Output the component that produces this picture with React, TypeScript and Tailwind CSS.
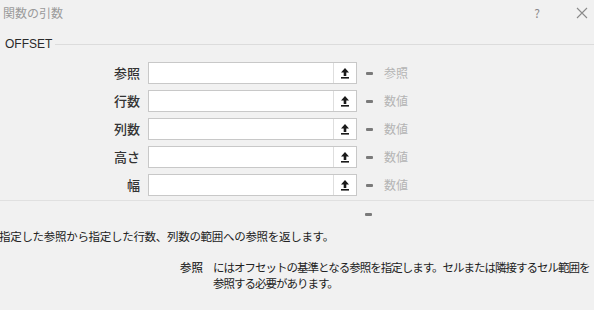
import React from "react"

const rows = [
  { label: "参照", value: "参照" },
  { label: "行数", value: "数値" },
  { label: "列数", value: "数値" },
  { label: "高さ", value: "数値" },
  { label: "幅", value: "数値" },
]

function UploadIcon() {
  return (
    <svg width="10" height="12" viewBox="0 0 10 12">
      <path d="M5 1 L9 5.5 H6.3 V9 H3.7 V5.5 H1 Z" fill="#1a1a1a" />
      <rect x="1" y="10" width="8" height="1.6" fill="#1a1a1a" />
    </svg>
  )
}

export default function App() {
  return (
    <div
      className="w-[594px] h-[310px] bg-[#f1f1f1] overflow-hidden text-[#222]"
      style={{ fontFamily: '"Noto Sans CJK JP", "Liberation Sans", sans-serif' }}
    >
      {/* title bar */}
      <div className="flex items-center h-[25px] pl-[3px] pr-[6px]">
        <span className="text-[12px] text-[#9a9a9a]">関数の引数</span>
        <span className="ml-auto text-[12px] text-[#8a8a8a] mr-[36px]">?</span>
        <svg width="12" height="12" viewBox="0 0 12 12">
          <path d="M1 1 L11 11 M11 1 L1 11" stroke="#8a8a8a" strokeWidth="1.1" />
        </svg>
      </div>

      {/* group header */}
      <div className="flex items-center h-[36px] pl-[5px] pt-[2px]">
        <span className="text-[12px] text-[#2a2a2a]" style={{ fontFamily: '"Liberation Sans", sans-serif' }}>
          OFFSET
        </span>
        <div className="flex-1 ml-[3px] h-px bg-[#dcdcdc]" />
      </div>

      {/* argument rows */}
      <div className="flex flex-col gap-[6px] pt-px">
        {rows.map((r) => (
          <div key={r.label} className="flex items-center h-[22px]">
            <div className="w-[141px] pr-[1px] text-right text-[13px] font-medium text-[#333]">{r.label}</div>
            <div className="ml-[7px] w-[209px] h-[22px] bg-white border border-[#c8c8c8] flex justify-end">
              <div className="w-[23px] h-full border-l border-[#dedede] flex items-center justify-center">
                <UploadIcon />
              </div>
            </div>
            <div className="ml-[9px] w-[7px] h-[3px] rounded-[1px] bg-[#7a7a7a]" />
            <div className="ml-[11px] text-[12px] text-[#b4b4b4]">{r.value}</div>
          </div>
        ))}
      </div>

      <div className="mt-[4px] h-px bg-[#e0e0e0]" />

      <div className="flex h-[26px] items-center pl-[365px]">
        <div className="w-[7px] h-[3px] rounded-[1px] bg-[#7a7a7a]" />
      </div>

      <div className="text-[11.5px] tracking-[-0.3px] text-[#222] leading-[18px] -ml-[1px] whitespace-nowrap">
        指定した参照から指定した行数、列数の範囲への参照を返します。
      </div>

      <div className="flex mt-[14px] pl-[180px] text-[11.5px] leading-[16px]">
        <div className="w-[33px] font-medium text-[#333]">参照</div>
        <div className="text-[#222] tracking-[-1px] whitespace-nowrap">
          にはオフセットの基準となる参照を指定します。セルまたは隣接するセル範囲を
          <br />
          参照する必要があります。
        </div>
      </div>
    </div>
  )
}
